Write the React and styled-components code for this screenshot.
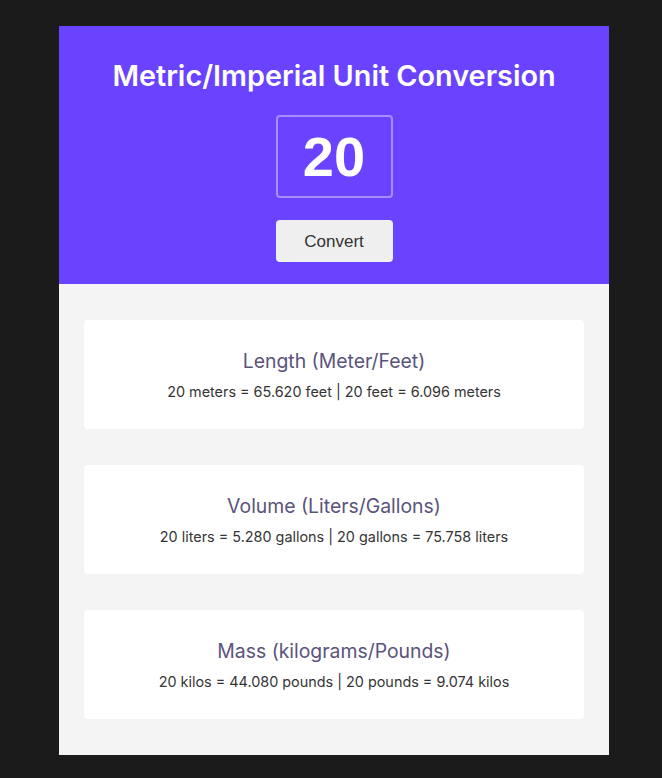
import React, { useState } from 'react';
import styled, { createGlobalStyle } from 'styled-components';

const GlobalStyle = createGlobalStyle`
	* {
		box-sizing: border-box;
	}
	body {
		margin: 0;
		background: #1b1b1b;
		font-family: 'Inter', 'Noto Sans', sans-serif;
	}
`;

const Page = styled.div`
	padding: 26px 0 23px 6px;
	display: flex;
	justify-content: center;
`;

const Container = styled.div`
	width: 550px;
	display: flex;
	flex-direction: column;
`;

const Header = styled.header`
	background: #6943ff;
	height: 258px;
	display: flex;
	flex-direction: column;
	align-items: center;
	padding-top: 31px;
`;

const Title = styled.h1`
	margin: 0;
	color: #ffffff;
	font-size: 28.8px;
	font-weight: 600;
	line-height: 38px;
`;

const NumberInput = styled.input`
	margin-top: 20px;
	width: 117px;
	height: 83px;
	background: transparent;
	border: 2px solid rgba(255, 255, 255, 0.4);
	border-radius: 4px;
	color: #ffffff;
	text-align: center;
	font-family: 'Liberation Sans', Arial, sans-serif;
	font-size: 56px;
	font-weight: 700;
	outline: none;
`;

const ConvertButton = styled.button`
	margin-top: 22px;
	width: 117px;
	height: 42px;
	padding-top: 2px;
	background: #efefef;
	border: none;
	border-radius: 4px;
	color: #333333;
	font-family: 'Liberation Sans', Arial, sans-serif;
	font-size: 17px;
	cursor: pointer;
`;

const Results = styled.main`
	background: #f4f4f4;
	padding: 36px 25px;
	display: flex;
	flex-direction: column;
	gap: 36px;
`;

const Card = styled.section`
	background: #ffffff;
	border-radius: 4px;
	height: 109px;
	display: flex;
	flex-direction: column;
	align-items: center;
	justify-content: center;
`;

const CardTitle = styled.h2`
	margin: 0;
	color: #5a537b;
	font-size: 19.4px;
	font-weight: 400;
	line-height: 28px;
`;

const CardText = styled.p`
	margin: 7px 0 0;
	color: #353535;
	font-size: 14.4px;
	line-height: 20px;
`;

const units = [
	{
		title: 'Length (Meter/Feet)',
		metric: 'meters',
		imperial: 'feet',
		factor: 3.281,
	},
	{
		title: 'Volume (Liters/Gallons)',
		metric: 'liters',
		imperial: 'gallons',
		factor: 0.264,
	},
	{
		title: 'Mass (kilograms/Pounds)',
		metric: 'kilos',
		imperial: 'pounds',
		factor: 2.204,
	},
];

export default function App() {
	const [value, setValue] = useState('20');
	const [amount, setAmount] = useState(20);

	return (
		<Page>
			<GlobalStyle />
			<Container>
				<Header>
					<Title>Metric/Imperial Unit Conversion</Title>
					<NumberInput
						type="text"
						value={value}
						onChange={(ev) => setValue(ev.target.value)}
					/>
					<ConvertButton onClick={() => setAmount(Number(value) || 0)}>
						Convert
					</ConvertButton>
				</Header>
				<Results>
					{units.map((unit) => (
						<Card key={unit.title}>
							<CardTitle>{unit.title}</CardTitle>
							<CardText>
								{`${amount} ${unit.metric} = ${(amount * unit.factor).toFixed(3)} ${unit.imperial} | ${amount} ${unit.imperial} = ${(amount / unit.factor).toFixed(3)} ${unit.metric}`}
							</CardText>
						</Card>
					))}
				</Results>
			</Container>
		</Page>
	);
}
